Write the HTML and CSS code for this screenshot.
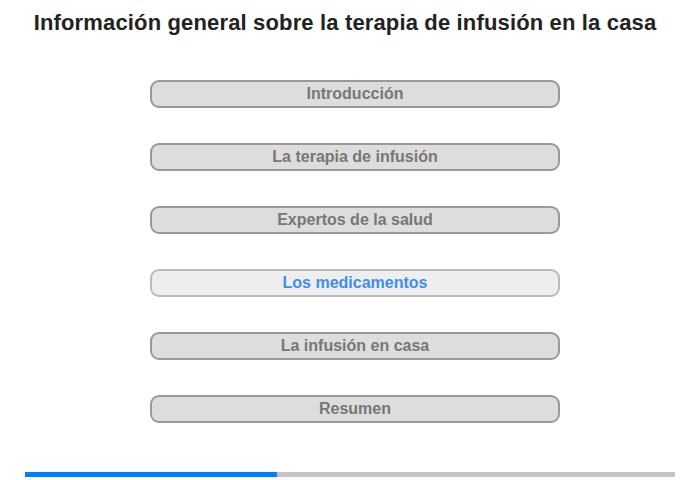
FILE: index.html
```html
<!DOCTYPE html>
<html lang="es">
<head>
    <meta charset="UTF-8">
    <title>Información general sobre la terapia de infusión en la casa</title>
    <link rel="stylesheet" href="styles.css">
</head>
<body>
    <div class="page">
        <h1 class="title">Información general sobre la terapia de infusión en la casa</h1>

        <ul class="menu">
            <li class="item">Introducción</li>
            <li class="item">La terapia de infusión</li>
            <li class="item">Expertos de la salud</li>
            <li class="item active">Los medicamentos</li>
            <li class="item">La infusión en casa</li>
            <li class="item">Resumen</li>
        </ul>

        <div class="progress">
            <div class="bar" style="width: 38.8%"></div>
        </div>
    </div>
</body>
</html>
```

FILE: styles.css
```css
/*初始化*/
html,body,ul,li,h1{
    margin: 0;
    padding: 0;
}

body{
    background: #fff;
    font-family: "Liberation Sans", Arial, sans-serif;
}

.page{
    width: 700px;
    height: 480px;
    display: flex;
    flex-direction: column;
    align-items: center;
}

/*标题*/
.title{
    margin: 10px 10px 0 0;
    font-size: 22px;
    line-height: 26px;
    letter-spacing: 0.15px;
    font-weight: bold;
    color: #222;
}

/*菜单*/
.menu{
    list-style: none;
    margin: 44px 0 0 10px;
    display: flex;
    flex-direction: column;
    gap: 35px;
}

.item{
    width: 406px;
    height: 24px;
    border: 2px solid #999;
    border-radius: 9px;
    background-color: #ddd;

    line-height: 24px;
    text-align: center;
    font-size: 16px;
    font-weight: bold;
    color: #777;
    cursor: pointer;
}

.item.active{
    background-color: #eee;
    border-color: #bbb;
    color: #3d8ef0;
}

/*进度条*/
.progress{
    width: 650px;
    height: 5px;
    margin-top: 49px;
    background-color: #c4c4c4;
}

.bar{
    height: 5px;
    background-color: #0080ff;
}
```
